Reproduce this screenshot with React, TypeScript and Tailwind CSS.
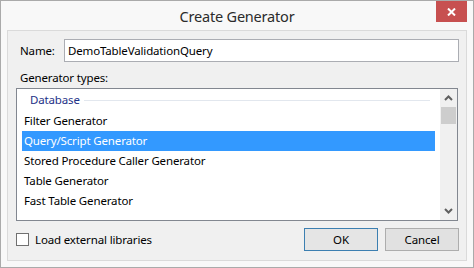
import React from "react";

const font = { fontFamily: '"Segoe UI", "Noto Sans", "Open Sans", sans-serif' };

function Chevron({ up }: { up?: boolean }) {
  return (
    <svg width="9" height="6" viewBox="0 0 9 6" className="block">
      <path
        d={up ? "M1 5 L4.5 1.5 L8 5" : "M1 1 L4.5 4.5 L8 1"}
        fill="none"
        stroke="#606060"
        strokeWidth="2"
      />
    </svg>
  );
}

export default function App() {
  const items = [
    "Filter Generator",
    "Query/Script Generator",
    "Stored Procedure Caller Generator",
    "Table Generator",
    "Fast Table Generator",
  ];
  return (
    <div
      className="w-[474px] h-[268px] border border-[#aaaaaa] bg-[#f8f8f8] flex flex-col relative text-[11.5px] tracking-[-0.15px] text-black"
      style={font}
    >
      <div className="h-[29px] flex items-center justify-center text-[14.5px] tracking-[-0.2px] text-[#2b2b2b] pt-[2px]">
        Create Generator
      </div>
      <div className="absolute top-0 right-[6px] w-[31px] h-[21px] bg-[#c75050] flex items-center justify-center">
        <svg width="9" height="8" viewBox="0 0 9 8">
          <path d="M1 0.5 L8 7.5 M8 0.5 L1 7.5" stroke="#ffffff" strokeWidth="2" />
        </svg>
      </div>
      <div className="ml-[6px] w-[460px] h-[231px] border border-[#dadada] bg-[#f0f0f0] flex flex-col">
        <div className="flex items-center mt-[8px] ml-[12px]">
          <span className="w-[44px]">Name:</span>
          <div className="w-[395px] h-[23px] border border-[#abadb3] bg-white flex items-center pl-[3px]">
            DemoTableValidationQuery
          </div>
        </div>
        <div className="ml-[12px] mt-[7px] h-[18px] leading-[18px]">Generator types:</div>
        <div className="ml-[8px] mt-[1px] w-[442px] h-[133px] border border-[#828790] bg-white flex">
          <div className="flex-1 flex flex-col">
            <div className="h-[22px] flex items-center pl-[13px] pr-[10px] text-[#1e3287]">
              <span>Database</span>
              <div className="flex-1 h-px bg-[#e2e7ee] ml-[4px]" />
            </div>
            {items.map((t, i) => (
              <div
                key={t}
                className={
                  i === 1
                    ? "h-[20px] flex items-center ml-[5px] mr-[5px] pl-[2px] bg-[#3399ff] text-white"
                    : "h-[20px] flex items-center ml-[5px] mr-[5px] pl-[2px]"
                }
              >
                {t}
              </div>
            ))}
          </div>
          <div className="w-[17px] bg-[#f0f0f0] flex flex-col items-center">
            <div className="h-[18px] flex items-center justify-center">
              <Chevron up />
            </div>
            <div className="w-[15px] h-[17px] bg-[#cdcdcd]" />
            <div className="flex-1" />
            <div className="h-[18px] flex items-center justify-center">
              <Chevron />
            </div>
          </div>
        </div>
        <div className="flex items-center mt-[7px] ml-[8px] mr-[7px]">
          <div className="w-[13px] h-[13px] border border-[#707070] bg-white" />
          <span className="ml-[6px]">Load external libraries</span>
          <div className="flex-1" />
          <div className="w-[74px] h-[23px] border border-[#3c7fb1] bg-[#e5e5e5] flex items-center justify-center">
            OK
          </div>
          <div className="ml-[7px] w-[74px] h-[23px] border border-[#adadad] bg-[#e1e1e1] flex items-center justify-center">
            Cancel
          </div>
        </div>
      </div>
    </div>
  );
}
